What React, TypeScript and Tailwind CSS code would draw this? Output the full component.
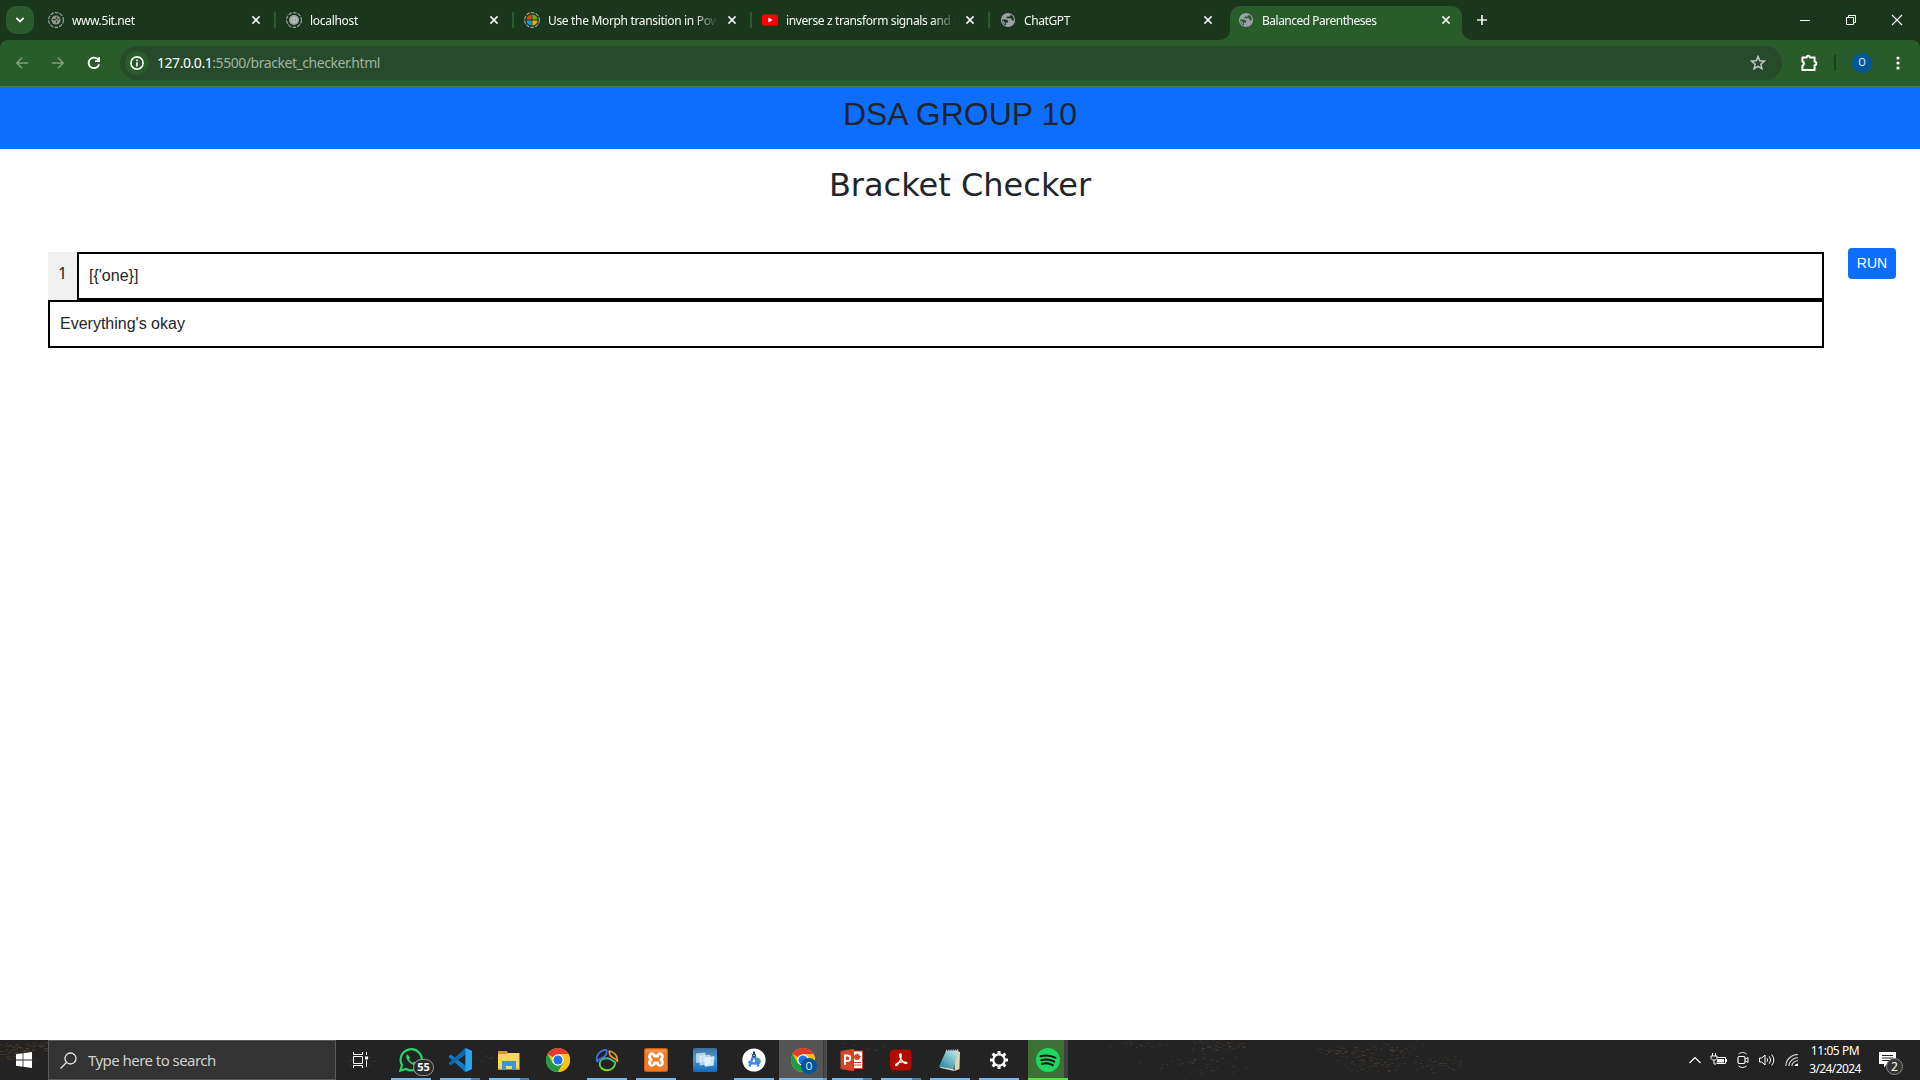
import React from "react";

type P = { children?: React.ReactNode; className?: string };

const Svg = ({ w, h, className = "", children }: { w: number; h: number } & P) => (
  <svg width={w} height={h} viewBox={`0 0 ${w} ${h}`} fill="none" className={`block shrink-0 ${className}`}>
    {children}
  </svg>
);

/* ---------- favicons ---------- */

const Globe = ({ ink = "#1b371b" }: { ink?: string }) => (
  <Svg w={16} h={16}>
    <circle cx="8" cy="8" r="7.1" fill="#9aa0a6" />
    <path d="M9.200 2.300c.9 0 1.300.5 1.300 1.100 0 .7-.6 1.100-1.400 1.100H7.600c-.7 0-1 .4-1 .9s.4.9 1 .9h2.600c.8 0 1.300.5 1.300 1.200 0 .6.4.9 1 .9h1.300a6 6 0 0 0-4.600-6.100Z" fill={ink} />
    <path d="M2.200 7.500h3.500c1.500 0 2.400.8 2.400 2v1H6.500c-.4 0-.6.3-.6.7v2.300A6 6 0 0 1 2.200 7.500Z" fill={ink} />
    <path d="M2.600 9.300 5 11.700" stroke="#9aa0a6" strokeWidth="1.300" />
  </Svg>
);

const Ring = ({ children }: P) => (
  <Svg w={16} h={16}>
    <circle cx="8" cy="8" r="7.4" stroke="#9aa0a6" strokeWidth="1.2" strokeDasharray="3.6 1.2" />
    {children}
  </Svg>
);

const RingGlobe = () => (
  <Ring>
    <circle cx="8" cy="8" r="4.6" fill="#8d948f" />
    <path d="M4.500 7.600h2.700l1.400 1.300v1.600M9.200 4.600 7.800 5.800l1.500 1.200 2 .3" stroke="#1b371b" strokeWidth="1" />
  </Ring>
);

const RingLocal = () => (
  <Ring>
    <circle cx="8" cy="8" r="5" fill="#9fa5a2" />
    <rect x="5.2" y="5.4" width="5.6" height="5.2" rx="1" fill="#c6cac8" />
    <path d="M6.4 6v4M9.6 6v4M6.4 8h3.2" stroke="#959b98" strokeWidth=".8" />
  </Ring>
);

const RingMicrosoft = () => (
  <Ring>
    <path d="M7.6 7.6H2.600A5.400 5.400 0 0 1 7.6 2.600Z" fill="#d8481f" />
    <path d="M8.4 7.6H13.400A5.400 5.400 0 0 0 8.4 2.600Z" fill="#72a800" />
    <path d="M7.6 8.4H2.600A5.400 5.400 0 0 0 7.6 13.400Z" fill="#0f9be0" />
    <path d="M8.4 8.4H13.400A5.400 5.400 0 0 1 8.4 13.400Z" fill="#f0ad05" />
  </Ring>
);

const YouTube = () => (
  <Svg w={16} h={16}>
    <rect x="0" y="2.4" width="16" height="11.4" rx="2.6" fill="#f00" />
    <path d="M6.3 5.6v5l4.3-2.5Z" fill="#fff" />
  </Svg>
);

const CloseX = () => (
  <Svg w={10} h={10}>
    <path d="M1.4 1.4l7.2 7.2M8.6 1.4 1.4 8.6" stroke="#eef3ee" strokeWidth="1.7" />
  </Svg>
);

/* ---------- tab strip ---------- */

type TabData = { title: string; icon: React.ReactNode; cls: string; active?: boolean; last?: boolean };

const tabs: TabData[] = [
  { title: "www.5it.net", icon: <RingGlobe />, cls: "tracking-[-0.4px]" },
  { title: "localhost", icon: <RingLocal />, cls: "tracking-[-0.3px]" },
  { title: "Use the Morph transition in Pow", icon: <RingMicrosoft />, cls: "tracking-[-0.33px]" },
  { title: "inverse z transform signals and s", icon: <YouTube />, cls: "tracking-[-0.38px]" },
  { title: "ChatGPT", icon: <Globe />, cls: "tracking-[-0.4px]", last: true },
  { title: "Balanced Parentheses", icon: <Globe ink="#285c2a" />, cls: "tracking-[-0.5px]", active: true },
];

const Tab = ({ t }: { t: TabData }) => (
  <div className="relative flex h-[34px] w-[238px] shrink-0 items-center pb-[6px]">
    {t.active && (
      <div className="absolute top-0 left-[2px] h-[34px] w-[232px] rounded-t-[10px] bg-[#285c2a]">
        <Svg w={10} h={10} className="absolute bottom-0 -left-[10px]">
          <path d="M10 0v10H0A10 10 0 0 0 10 0Z" fill="#285c2a" />
        </Svg>
        <Svg w={10} h={10} className="absolute -right-[10px] bottom-0">
          <path d="M0 0v10h10A10 10 0 0 1 0 0Z" fill="#285c2a" />
        </Svg>
      </div>
    )}
    <div className="relative flex w-full items-center pl-[10px]">
      {t.icon}
      <span
        className={`ml-2 w-[172px] pt-[2px] text-[12px] leading-4 whitespace-nowrap text-[#f8fbf8] [mask-image:linear-gradient(to_right,black_146px,transparent_170px)] ${t.cls}`}
      >
        {t.title}
      </span>
      <span className="ml-[7px]">
        <CloseX />
      </span>
      {!t.active && !t.last && <span className="ml-[13px] h-4 w-[2px] bg-[#285c2a]" />}
    </div>
  </div>
);

const TabStrip = () => (
  <div className="flex h-10 items-start bg-[#1b371b] pt-[6px] pl-[6px]">
    <div className="mr-1 flex h-7 w-7 items-center justify-center rounded-[10px] bg-[#285c2a]">
      <Svg w={10} h={8}>
        <path d="M1.3 1.8 5 5.5l3.7-3.7" stroke="#fff" strokeWidth="1.9" />
      </Svg>
    </div>
    {tabs.map((t) => (
      <Tab key={t.title} t={t} />
    ))}
    <Svg w={12} h={12} className="mt-2 ml-[10px]">
      <path d="M6 1v10M1 6h10" stroke="#e8efe8" strokeWidth="1.7" />
    </Svg>
    <div className="mt-2 mr-[17px] ml-auto flex items-center gap-[34px]">
      <Svg w={12} h={12}>
        <path d="M1 6.5h10" stroke="#fff" />
      </Svg>
      <Svg w={12} h={12}>
        <path d="M1.5 3.5h7v7h-7ZM3.5 3.5v-2h7v7h-2" stroke="#fff" />
      </Svg>
      <Svg w={12} h={12}>
        <path d="M1 1l10 10M11 1 1 11" stroke="#fff" strokeWidth="1.1" />
      </Svg>
    </div>
  </div>
);

/* ---------- toolbar ---------- */

const Toolbar = () => (
  <div className="bg-[#1b371b]">
    <div className="flex h-[47px] items-center rounded-t-[8px] border-b border-[#4f7a51] bg-[#285c2a] pl-[15px]">
      <Svg w={14} h={14}>
        <path d="M13 7H2M7 1.7 1.8 7 7 12.3" stroke="#7d9f7e" strokeWidth="1.6" />
      </Svg>
      <Svg w={14} h={14} className="ml-[22px]">
        <path d="M1 7h11M7 1.7 12.2 7 7 12.3" stroke="#7d9f7e" strokeWidth="1.6" />
      </Svg>
      <Svg w={14} h={14} className="ml-[22px]">
        <path d="M12.1 8.2A5.3 5.3 0 1 1 10.8 3.2L12 4.5" stroke="#fff" strokeWidth="1.8" />
        <path d="M13 .9v5H8V4.2h3.2V.9Z" fill="#fff" />
      </Svg>
      <div className="ml-[19px] flex h-[34px] w-[1662px] items-center rounded-full bg-[#274a2a] pr-4 pl-[5px]">
        <div className="flex h-6 w-6 items-center justify-center rounded-full bg-[#285c2a]">
          <Svg w={14} h={14}>
            <circle cx="7" cy="7" r="6.1" stroke="#fff" strokeWidth="1.6" />
            <path d="M7 6.2v4.2M7 3.6v1.6" stroke="#fff" strokeWidth="1.6" />
          </Svg>
        </div>
        <span className="ml-2 text-[14px] leading-5 tracking-[-0.45px] text-[#9fb3a0]">
          <span className="text-white">127.0.0.1</span>:5500/bracket_checker.html
        </span>
        <Svg w={16} h={16} className="ml-auto">
          <path d="M8 1.6l1.75 4.2 4.55.4-3.45 3 1.05 4.4L8 11.3l-3.9 2.3 1.05-4.4-3.45-3 4.55-.4Z" stroke="#c3c9c4" strokeWidth="1.5" />
        </Svg>
      </div>
      <Svg w={18} h={18} className="ml-[18px]">
        <path d="M2.400 3.400h4.300a1.600 1.600 0 0 1 3.200 0h4.700v4.400a1.700 1.700 0 0 1 0 3.400v4.700H2.400v-4.200a2.200 2.200 0 0 0 0-4.200Z" stroke="#fff" strokeWidth="2" strokeLinejoin="round" />
      </Svg>
      <div className="ml-4 h-4 w-[2px] bg-[#1b401d]" />
      <div className="ml-4 flex h-5 w-5 items-center justify-center rounded-full bg-[#04579b] pt-px font-[Roboto,sans-serif] text-[11px] text-[#dcebf7]">O</div>
      <Svg w={4} h={14} className="ml-[24px]">
        <circle cx="2" cy="2" r="1.6" fill="#fff" />
        <circle cx="2" cy="7" r="1.6" fill="#fff" />
        <circle cx="2" cy="12" r="1.6" fill="#fff" />
      </Svg>
    </div>
  </div>
);

/* ---------- page ---------- */

const Page = () => (
  <main className="flex-1 bg-white font-['Liberation_Sans',Arial,sans-serif] text-base text-[#212529]">
    <header className="h-[62px] bg-[#0d6efd] pt-2 text-center">
      <h2 className="text-[32px] leading-[38px]">DSA GROUP 10</h2>
    </header>
    <h2 className="pt-[17px] text-center font-['DejaVu_Sans',Verdana,sans-serif] text-[32px] leading-[38px]">Bracket Checker</h2>
    <div className="mt-11 flex pl-12">
      <div className="mt-1 w-[1776px]">
        <div className="flex h-12">
          <div className="w-[29px] bg-[#f0f0f0] pt-[9px] text-center font-['Noto_Sans',sans-serif] leading-6">1</div>
          <div className="flex-1 border-2 border-black px-[10px] pt-[10px] leading-6">{"[{'one}]"}</div>
        </div>
        <div className="h-12 border-2 border-black px-[10px] pt-[10px] leading-6">Everything's okay</div>
      </div>
      <button className="ml-6 h-[31px] w-12 rounded-[4px] bg-[#0d6efd] text-[14px] text-white">RUN</button>
    </div>
  </main>
);

/* ---------- taskbar icons ---------- */

const WhatsApp = () => (
  <div className="relative">
    <Svg w={24} h={24}>
      <path d="M1.4 22.6 3 17A10.6 10.6 0 1 1 7 21Z" stroke="#25d366" strokeWidth="2.2" />
      <path d="M8.4 6.3c-.8.4-1.4 1.4-1.2 2.6.6 3.5 4.4 7.400 8 8 1.300.1 2.500-.8 2.700-2l-2.900-1.500-1.300 1.300c-1.600-.8-2.900-2.100-3.600-3.700l1-1.300Z" fill="#25d366" />
    </Svg>
    <span className="absolute top-[11px] left-[14px] flex h-[17px] w-[21px] items-center justify-center rounded-full border border-[#9a9a9a] bg-[#2b2b2b] text-[11px] font-bold text-white">55</span>
  </div>
);

const VSCode = () => (
  <Svg w={24} h={24}>
    <path d="M17.500 0 24 3v18l-6.500 3L.4 8.700 2.600 6.500 17.500 17.600Z" fill="#0a7cc9" />
    <path d="M17.500 0v6.400L2.600 17.500.4 15.300Z" fill="#0a68b0" />
    <path d="M17.500 0 24 3v18l-6.500 3Z" fill="#29a5f0" />
  </Svg>
);

const Explorer = () => (
  <Svg w={24} h={24}>
    <path d="M1 3.500h9l1.500 2H1Z" fill="#e09c12" />
    <path d="M1 5h21.500v16.500H1Z" fill="#fcd462" />
    <path d="M1 3h9v3H1Z" fill="#d99a16" />
    <path d="M5 13h14v9h-4v-4H9v4H5Z" fill="#3a95dc" />
    <path d="M1 20h4v1.600H1ZM19 20h3.500v1.600H19Z" fill="#f0bb42" />
  </Svg>
);

const Chrome = () => (
  <Svg w={24} h={24}>
    <circle cx="12" cy="12" r="12" fill="#fbc116" />
    <path d="M12 12 1.600 6A12 12 0 0 1 22.400 6Z" fill="#e33b2e" />
    <path d="M1.600 6 7 15.500 12 17.500 12 24A12 12 0 0 1 1.600 6Z" fill="#229a48" />
    <path d="M17.200 15 12 24 8 19l4-3Z" fill="#229a48" />
    <path d="M12 6h10.400A12 12 0 0 1 12 24l5.200-9Z" fill="#fbc116" />
    <circle cx="12" cy="12" r="5.700" fill="#fff" />
    <circle cx="12" cy="12" r="4.600" fill="#1a73e8" />
  </Svg>
);

const Swirl = () => (
  <Svg w={24} h={24}>
    <path d="M2.400 13.500C-.2 8.500 4.500 2 11.400 1.800c1 4-1.200 7.600-5.900 8.700-1.400.7-2.400 1.700-3.100 3Z" stroke="#3f74e8" strokeWidth="1.700" strokeLinejoin="round" />
    <path d="M14.200 3c4.800.6 8.600 4.800 8.300 10.200-1-1.600-2.300-2.500-4-3.200-2.900-1.500-4.500-4-4.300-7Z" stroke="#f09b1d" strokeWidth="1.700" strokeLinejoin="round" />
    <path d="M12.200 10.300c1.800 0 3 .6 4.500 1.800 1.600.7 3.200 1.600 3.700 2.800-1.100 4.800-4.300 7.300-8.200 7.300-4.400 0-8-3-7.500-7 .3-3.200 3.800-4.900 7.500-4.900Z" stroke="url(#swirl)" strokeWidth="1.900" />
    <defs>
      <linearGradient id="swirl" x1="0" y1="10" x2="0" y2="22" gradientUnits="userSpaceOnUse">
        <stop stopColor="#3fb0a0" />
        <stop offset="1" stopColor="#7ce01c" />
      </linearGradient>
    </defs>
  </Svg>
);

const Xampp = () => (
  <Svg w={24} h={24}>
    <rect x=".5" y=".5" width="23" height="23" rx="1.500" fill="#f07a23" stroke="#c65e14" />
    <rect x="2" y="1.500" width="20" height="3" fill="#f8a263" opacity=".6" />
    <path d="M6.500 6.200c2-1.200 3.600-.2 4 1.800h3c.5-2.200 2.500-3 4.200-1.500 1.500 1.500.5 3.500-.7 5 1.400 1.500 2.200 3.600.6 5.200-1.700 1.400-3.800.4-4.100-1.700h-3c-.4 2-2.300 3-4 1.800-1.700-1.600-.9-3.700.5-5.300-1.300-1.500-2-3.800-.5-5.300Z" stroke="#fff" strokeWidth="2.800" />
  </Svg>
);

const Panes = () => (
  <Svg w={24} h={24}>
    <rect width="24" height="24" rx="1.500" fill="url(#panes)" />
    <path d="M3.500 5.800 12 5v8.500l-8.500 1Z" fill="#d9edfa" opacity=".75" stroke="#f2fafe" strokeWidth=".7" />
    <path d="M7 8.300 17 7v8.800L7 17Z" fill="#cfe7f7" opacity=".75" stroke="#fff" strokeWidth=".7" />
    <path d="M12 9.800 21 8.500l-.8 8.800-8.200.9Z" fill="#eaf6fd" opacity=".85" stroke="#fff" strokeWidth=".7" />
    <defs>
      <linearGradient id="panes" x1="0" y1="0" x2="0" y2="24" gradientUnits="userSpaceOnUse">
        <stop stopColor="#3b6f9f" />
        <stop offset=".45" stopColor="#4a9bd3" />
        <stop offset="1" stopColor="#1268b3" />
      </linearGradient>
    </defs>
  </Svg>
);

const Studio = () => (
  <Svg w={24} h={24}>
    <circle cx="12" cy="12" r="11.600" fill="#fff" />
    <path d="M15 9.500a4 4 0 0 1 3 6.500h-4l-1-3Z" fill="#4bb36b" />
    <path d="M12 6 7.400 18.500M12 6l4.600 12.500M6.500 13.800c3.300 2 7.700 2 11 0" stroke="#4285f4" strokeWidth="2.400" />
    <path d="M12 3.500v3" stroke="#222" strokeWidth="1.800" />
    <circle cx="12" cy="7.500" r="2" fill="#1f3c6e" />
    <circle cx="12" cy="7.500" r=".8" fill="#dfe9fb" />
  </Svg>
);

const ChromeProfile = () => (
  <div className="relative">
    <Chrome />
    <span className="absolute top-[10px] left-[10px] flex h-4 w-4 items-center justify-center rounded-full bg-[#04539a] font-[Roboto,sans-serif] text-[10px] text-[#dcebf7]">O</span>
  </div>
);

const PowerPoint = () => (
  <Svg w={24} h={24}>
    <path d="M13 3h9.500v17.500H13Z" fill="#fff" stroke="#d24625" strokeWidth="1" />
    <circle cx="17" cy="9" r="3" fill="#d24625" />
    <path d="M17.600 5.500v3h3.200M14 14.500h7M14 17h7" stroke="#d24625" strokeWidth="1.200" />
    <path d="M.5 3 14 .8v22.400L.5 21Z" fill="#d24625" />
    <path d="M5 17V7.500h2.600a2.700 2.700 0 0 1 0 5.400H5" stroke="#fff" strokeWidth="1.900" />
  </Svg>
);

const Acrobat = () => (
  <Svg w={24} h={24}>
    <rect x="1" y="1.500" width="21.500" height="21" rx="4" fill="#b30b00" />
    <path d="M11.500 6c-1.300 0-.9 2.400.3 4.800 1.500 3 4.200 5 5.700 4.600 1.400-.6-.6-2-4.300-1.500-3.700.5-7 2.100-6.500 3.300.8 1.200 3-1.500 4.300-4.600 1.200-2.900 1.800-6.600.5-6.600Z" stroke="#fff" strokeWidth="1.300" />
  </Svg>
);

const Notepad = () => (
  <Svg w={24} h={24}>
    <path d="M17 2.500 22 4l-.5 17-5 2Z" fill="#dcd7b4" />
    <path d="m8 3 12.500-.5L15.500 21 1 18.500Z" fill="url(#note)" />
    <path d="m1 18.500 14.500 2.500.7 2L3 20Z" fill="#d7dee0" />
    <path d="M8 2.500 20.500 2" stroke="#c9d4d6" strokeWidth="1.400" strokeDasharray="1.200 1" />
    <defs>
      <linearGradient id="note" x1="4" y1="20" x2="18" y2="3" gradientUnits="userSpaceOnUse">
        <stop stopColor="#2b8ba1" />
        <stop offset=".6" stopColor="#7fc0cc" />
        <stop offset="1" stopColor="#c3e4e8" />
      </linearGradient>
    </defs>
  </Svg>
);

const Gear = () => (
  <Svg w={24} h={24}>
    <circle cx="12" cy="12" r="5.700" stroke="#fff" strokeWidth="2.200" />
    {[0, 45, 90, 135, 180, 225, 270, 315].map((a) => (
      <rect key={a} x="10.500" y="3" width="3" height="3.400" fill="#fff" transform={`rotate(${a} 12 12)`} />
    ))}
  </Svg>
);

const Spotify = () => (
  <Svg w={24} h={24}>
    <circle cx="12" cy="12" r="12" fill="#1ed760" />
    <path d="M4.500 8.300c5-1.500 10.500-1 15 1.500M5.300 12.200c4.500-1.200 9-.7 12.900 1.500M6 15.900c3.800-1 7.500-.6 10.800 1.300" stroke="#111" strokeWidth="2" strokeLinecap="round" />
  </Svg>
);

type TaskItem = { icon: React.ReactNode; bar: "none" | "full" | "split" | "active" | "green" };

const apps: TaskItem[] = [
  { icon: <WhatsApp />, bar: "full" },
  { icon: <VSCode />, bar: "split" },
  { icon: <Explorer />, bar: "split" },
  { icon: <Chrome />, bar: "none" },
  { icon: <Swirl />, bar: "full" },
  { icon: <Xampp />, bar: "full" },
  { icon: <Panes />, bar: "none" },
  { icon: <Studio />, bar: "full" },
  { icon: <ChromeProfile />, bar: "active" },
  { icon: <PowerPoint />, bar: "split" },
  { icon: <Acrobat />, bar: "split" },
  { icon: <Notepad />, bar: "full" },
  { icon: <Gear />, bar: "full" },
  { icon: <Spotify />, bar: "green" },
];

const Bar = ({ bar }: { bar: TaskItem["bar"] }) => (
  <div className="flex h-[2px] w-full">
    {bar === "full" && <div className="flex-1 bg-[#76b9ed]" />}
    {bar === "split" && (
      <>
        <div className="flex-1 bg-[#76b9ed]" />
        <div className="w-[9px] bg-[#517ca0]" />
      </>
    )}
    {bar === "active" && (
      <>
        <div className="flex-1 bg-[#76b9ed]" />
        <div className="w-1 bg-[#649dca]" />
      </>
    )}
    {bar === "green" && <div className="flex-1 bg-[#50e53c]" />}
  </div>
);

const TaskApp = ({ app }: { app: TaskItem }) => {
  const bg =
    app.bar === "active"
      ? "w-12 -mx-1 bg-[linear-gradient(to_right,#555_0_44px,#3a3a3a_44px_45px,#4a4a4a_45px)]"
      : app.bar === "green"
        ? "w-10 bg-[linear-gradient(to_right,#3c7036_0_36px,#3e3e3e_36px)]"
        : "w-10";
  return (
    <div className={`flex h-10 shrink-0 flex-col ${bg}`}>
      <div className="flex flex-1 items-center justify-center pt-[2px]">{app.icon}</div>
      <Bar bar={app.bar} />
    </div>
  );
};

/* Brown flecks of the desktop wallpaper showing through the translucent bar. */
const clusters = [
  [14, 12, 26, 10, 120],
  [40, 6, 18, 6, 40],
  [350, 20, 30, 8, 20],
  [490, 15, 30, 8, 12],
  [860, 8, 40, 10, 14],
  [1140, 4, 40, 4, 20],
  [1215, 6, 34, 6, 50],
  [1190, 24, 60, 12, 44],
  [1345, 11, 40, 6, 50],
  [1372, 24, 40, 12, 60],
  [1400, 8, 30, 8, 44],
  [1440, 23, 50, 10, 50],
];

const flecks = (() => {
  let s = 7;
  const rnd = () => (s = (s * 16807) % 2147483647) / 2147483647;
  return clusters.flatMap(([cx, cy, rx, ry, n]) =>
    Array.from({ length: n }, () => ({
      x: Math.round(cx + (rnd() + rnd() - 1) * rx),
      y: Math.round(cy + (rnd() + rnd() - 1) * ry),
      w: rnd() > 0.4 ? 3 : 2,
      o: 0.05 + rnd() * 0.22,
    })),
  );
})();

const Texture = () => (
  <Svg w={1920} h={40} className="absolute inset-0">
    {flecks.map((f, i) => (
      <rect key={i} x={f.x} y={f.y} width={f.w} height="1" fill="#94683f" opacity={f.o} />
    ))}
  </Svg>
);

const Tray = () => (
  <div className="ml-auto flex h-10 items-center text-white">
    <Svg w={14} h={8}>
      <path d="M1.500 7 7 1.500 12.500 7" stroke="#fff" strokeWidth="1.200" />
    </Svg>
    <Svg w={18} h={14} className="ml-[8px]">
      <path d="M2.500 0v3M5.500 0v3M1 3h6v2.500L5.500 7h-3L1 5.500ZM4 7v4h2" stroke="#fff" />
      <path d="M7.500 4.500h8v6h-9" stroke="#fff" />
      <path d="M7.500 6H14v3.500H6.500Z" fill="#fff" />
      <path d="M16.500 6v3" stroke="#fff" />
    </Svg>
    <Svg w={14} h={18} className="ml-[8px]">
      <rect x="2" y="5.500" width="7" height="7" rx="1.500" stroke="#fff" strokeWidth="1.200" />
      <path d="M9.500 8 12 6.500v5L9.500 10M2.500 3c2.500-2 5.500-2 8 0M2.500 15c2.500 2 5.500 2 8 0" stroke="#fff" />
    </Svg>
    <Svg w={18} h={16} className="ml-[8px]">
      <path d="M1.500 6h2.300L7 3v10L3.800 10H1.500Z" stroke="#fff" />
      <path d="M9 6.300q1.300 1.700 0 3.400M11.300 4.300q2.700 3.700 0 7.400M13.700 2.500q4.200 5.500 0 11" stroke="#fff" />
    </Svg>
    <Svg w={14} h={14} className="ml-[9px]">
      <path d="M.8 13A12 12 0 0 1 13 1.500M3.800 13A9 9 0 0 1 13 4.800M6.800 13A6 6 0 0 1 13 7.800" stroke="#ddd" strokeWidth="1.100" />
      <path d="M9.500 13A3.500 3.500 0 0 1 13 10.500V13Z" fill="#fff" />
    </Svg>
    <div className="ml-[9px] w-[54px] text-center text-[12px] leading-[18px] tracking-[-0.6px] whitespace-nowrap">
      <div className="tracking-[-0.45px]">11:05 PM</div>
      <div>3/24/2024</div>
    </div>
    <div className="relative mr-[17px] ml-[17px] h-7 w-[24px]">
      <Svg w={17} h={17} className="mt-[6px]">
        <path d="M0 0h17v12H8l-3 3.500V12H0Z" fill="#fff" />
        <path d="M3 3.500h11M3 6h11M3 8.500h8" stroke="#222" />
      </Svg>
      <span className="absolute top-[12px] left-[7px] flex h-[17px] w-[17px] items-center justify-center rounded-full border border-[#8a8a8a] bg-[#333] text-[12px]">2</span>
    </div>
  </div>
);

const Taskbar = () => (
  <footer className="relative flex h-10 bg-[#232323]">
    <Texture />
    <div className="relative flex h-10 w-full">
      <div className="flex w-12 items-center justify-center">
        <Svg w={16} h={16}>
          <path d="M0 2.200 6.600 1.300v6.300H0ZM7.400 1.200 16 0v7.600H7.400ZM0 8.400h6.600v6.300L0 13.800ZM7.400 8.400H16V16l-8.600-1.200Z" fill="#fff" />
        </Svg>
      </div>
      <div className="flex w-[288px] items-center border border-[#5c5c5c] bg-[#333]">
        <Svg w={17} h={17} className="ml-[11px]">
          <circle cx="10.500" cy="6.500" r="5.500" stroke="#e8e8e8" strokeWidth="1.300" />
          <path d="M6.500 10.500.5 16.500" stroke="#e8e8e8" strokeWidth="1.300" />
        </Svg>
        <span className="ml-[11px] text-[15px] leading-5 tracking-[-0.55px] whitespace-nowrap text-[#d0d0d0]">Type here to search</span>
      </div>
      <Svg w={17} h={16} className="mt-3 ml-[16px]">
        <path d="M1.500 0v2.500h9V0M1.500 16v-2.500h9V16M1.500 4.500h9v7h-9ZM14.500 0v3M14.500 8.500V15" stroke="#fff" />
        <rect x="13" y="4.500" width="3" height="3" fill="#fff" />
      </Svg>
      <div className="ml-[22px] flex gap-[9px]">
        {apps.map((a, i) => (
          <TaskApp key={i} app={a} />
        ))}
      </div>
      <Tray />
    </div>
  </footer>
);

export default function App() {
  return (
    <div className="flex h-[1080px] w-[1920px] flex-col overflow-hidden font-['Noto_Sans',sans-serif]">
      <TabStrip />
      <Toolbar />
      <Page />
      <Taskbar />
    </div>
  );
}
